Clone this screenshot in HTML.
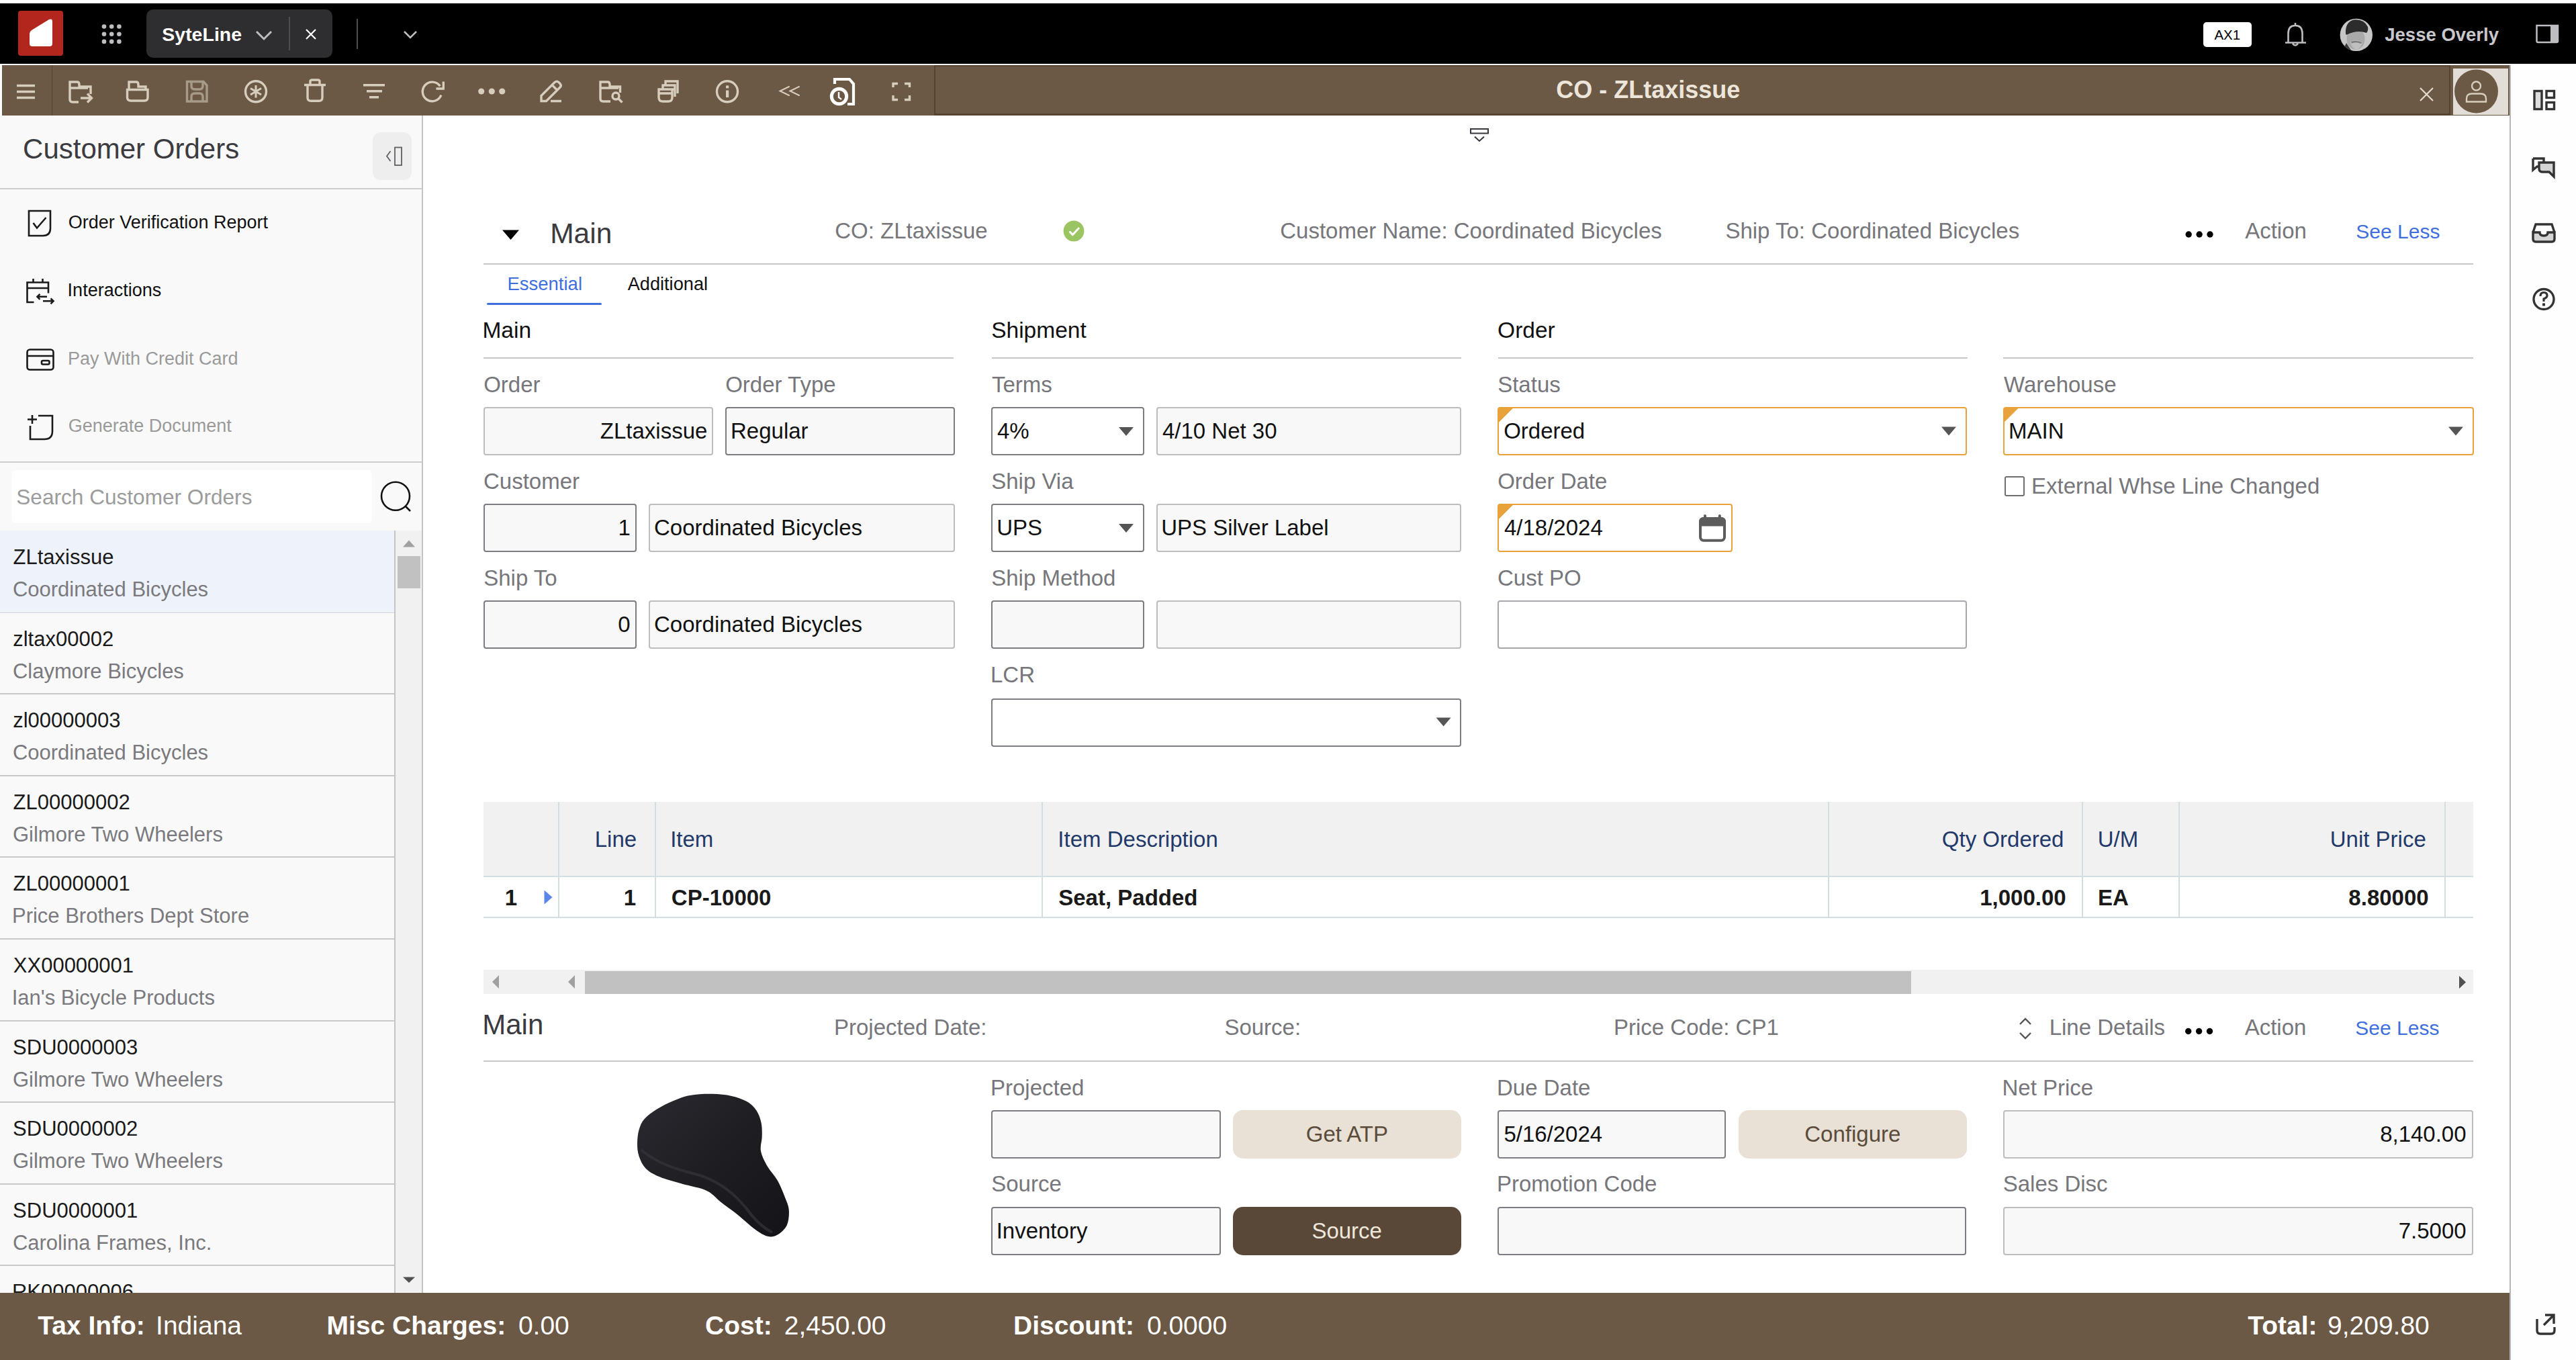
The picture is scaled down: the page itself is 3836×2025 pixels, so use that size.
<!DOCTYPE html>
<html><head><meta charset="utf-8"><title>CO - ZLtaxissue</title>
<style>
html,body{margin:0;padding:0;}
body{width:3836px;height:2025px;position:relative;overflow:hidden;background:#fff;font-family:"Liberation Sans",sans-serif;}
.t{position:absolute;white-space:nowrap;}
.b{position:absolute;box-sizing:border-box;}
svg.ov{position:absolute;left:0;top:0;}
</style></head><body>
<div class="b" style="left:0.00px;top:5.00px;width:3836.00px;height:90.00px;background:#000;"></div>
<div class="b" style="left:27.00px;top:16.00px;width:67.00px;height:67.00px;background:#b3261e;border-radius:4px;"></div>
<div class="b" style="left:218.00px;top:14.00px;width:277.00px;height:72.00px;background:#2e2e30;border-radius:10px;"></div>
<div class="t" style="left:241.28px;top:36.77px;font-size:28.5px;line-height:28.5px;color:#ffffff;font-weight:700;">SyteLine</div>
<div class="b" style="left:430.00px;top:25.00px;width:2.00px;height:50.00px;background:#4d4d52;"></div>
<div class="b" style="left:531.00px;top:28.00px;width:2.00px;height:45.00px;background:#4d4d52;"></div>
<div class="b" style="left:3281.00px;top:33.00px;width:72.00px;height:37.00px;background:#fff;border-radius:5px;"></div>
<div class="t" style="left:3297.43px;top:41.65px;font-size:20.5px;line-height:20.5px;color:#000;font-weight:400;">AX1</div>
<div class="t" style="left:3551.28px;top:37.72px;font-size:27.5px;line-height:27.5px;color:#c8c8cc;font-weight:700;">Jesse Overly</div>
<div class="b" style="left:3.00px;top:97.00px;width:3734.00px;height:75.00px;background:#6b5845;"></div>
<div class="b" style="left:76.50px;top:97.00px;width:1.50px;height:75.00px;background:#564330;"></div>
<div class="b" style="left:1391.00px;top:97.00px;width:2258.00px;height:75.00px;background:#6b5845;box-shadow:inset 0 0 0 2px #564330;"></div>
<div class="b" style="left:1391.00px;top:169.00px;width:2258.00px;height:3.00px;background:#564330;"></div>
<div class="t" style="left:2317.22px;top:116.33px;font-size:36px;line-height:36px;color:#ede5da;font-weight:700;">CO - ZLtaxissue</div>
<div class="b" style="left:3653.00px;top:102.00px;width:82.00px;height:69.00px;background:#e2ddd6;"></div>
<div class="b" style="left:3737.00px;top:97.00px;width:2.00px;height:1928.00px;background:#b6b6ba;"></div>
<div class="b" style="left:3739.00px;top:97.00px;width:97.00px;height:1928.00px;background:#fefefe;"></div>
<div class="b" style="left:0.00px;top:172.00px;width:628.00px;height:1753.00px;background:#f9f9f9;"></div>
<div class="b" style="left:628.00px;top:172.00px;width:2.00px;height:1753.00px;background:#c4c4c4;"></div>
<div class="t" style="left:34.07px;top:201.05px;font-size:42px;line-height:42px;color:#3b3b40;font-weight:400;">Customer Orders</div>
<div class="b" style="left:554.60px;top:196.60px;width:58.90px;height:71.80px;background:#eeeeee;border-radius:12px;"></div>
<div class="b" style="left:0.00px;top:280.00px;width:628.00px;height:2.00px;background:#cdcdcd;"></div>
<div class="t" style="left:101.82px;top:318.14px;font-size:27px;line-height:27px;color:#111;font-weight:400;">Order Verification Report</div>
<div class="t" style="left:100.61px;top:418.54px;font-size:27px;line-height:27px;color:#111;font-weight:400;">Interactions</div>
<div class="t" style="left:100.89px;top:520.94px;font-size:27px;line-height:27px;color:#9a9a9a;font-weight:400;">Pay With Credit Card</div>
<div class="t" style="left:101.74px;top:621.44px;font-size:27px;line-height:27px;color:#9a9a9a;font-weight:400;">Generate Document</div>
<div class="b" style="left:0.00px;top:687.00px;width:628.00px;height:2.00px;background:#cdcdcd;"></div>
<div class="b" style="left:18.00px;top:700.00px;width:535.50px;height:79.00px;background:#fff;border-radius:6px;"></div>
<div class="t" style="left:24.27px;top:724.85px;font-size:31.6px;line-height:31.6px;color:#9b9b9b;font-weight:400;">Search Customer Orders</div>
<div class="b" style="left:0.00px;top:790.00px;width:588.00px;height:120.10px;background:#eef2fa;"></div>
<div class="t" style="left:19.52px;top:814.06px;font-size:31px;line-height:31px;color:#1a1a1a;font-weight:400;">ZLtaxissue</div>
<div class="t" style="left:18.93px;top:862.06px;font-size:31px;line-height:31px;color:#7a7a7e;font-weight:400;">Coordinated Bicycles</div>
<div class="b" style="left:0.00px;top:910.60px;width:588.00px;height:2.00px;background:#dde2ea;"></div>
<div class="t" style="left:19.24px;top:935.66px;font-size:31px;line-height:31px;color:#1a1a1a;font-weight:400;">zltax00002</div>
<div class="t" style="left:18.93px;top:983.66px;font-size:31px;line-height:31px;color:#7a7a7e;font-weight:400;">Claymore Bicycles</div>
<div class="b" style="left:0.00px;top:1032.20px;width:588.00px;height:2.00px;background:#c9c9cc;"></div>
<div class="t" style="left:19.24px;top:1057.26px;font-size:31px;line-height:31px;color:#1a1a1a;font-weight:400;">zl00000003</div>
<div class="t" style="left:18.93px;top:1105.26px;font-size:31px;line-height:31px;color:#7a7a7e;font-weight:400;">Coordinated Bicycles</div>
<div class="b" style="left:0.00px;top:1153.80px;width:588.00px;height:2.00px;background:#c9c9cc;"></div>
<div class="t" style="left:19.52px;top:1178.86px;font-size:31px;line-height:31px;color:#1a1a1a;font-weight:400;">ZL00000002</div>
<div class="t" style="left:18.94px;top:1226.86px;font-size:31px;line-height:31px;color:#7a7a7e;font-weight:400;">Gilmore Two Wheelers</div>
<div class="b" style="left:0.00px;top:1275.40px;width:588.00px;height:2.00px;background:#c9c9cc;"></div>
<div class="t" style="left:19.52px;top:1300.46px;font-size:31px;line-height:31px;color:#1a1a1a;font-weight:400;">ZL00000001</div>
<div class="t" style="left:17.96px;top:1348.46px;font-size:31px;line-height:31px;color:#7a7a7e;font-weight:400;">Price Brothers Dept Store</div>
<div class="b" style="left:0.00px;top:1397.00px;width:588.00px;height:2.00px;background:#c9c9cc;"></div>
<div class="t" style="left:19.80px;top:1422.06px;font-size:31px;line-height:31px;color:#1a1a1a;font-weight:400;">XX00000001</div>
<div class="t" style="left:17.64px;top:1470.06px;font-size:31px;line-height:31px;color:#7a7a7e;font-weight:400;">Ian's Bicycle Products</div>
<div class="b" style="left:0.00px;top:1518.60px;width:588.00px;height:2.00px;background:#c9c9cc;"></div>
<div class="t" style="left:19.09px;top:1543.66px;font-size:31px;line-height:31px;color:#1a1a1a;font-weight:400;">SDU0000003</div>
<div class="t" style="left:18.94px;top:1591.66px;font-size:31px;line-height:31px;color:#7a7a7e;font-weight:400;">Gilmore Two Wheelers</div>
<div class="b" style="left:0.00px;top:1640.20px;width:588.00px;height:2.00px;background:#c9c9cc;"></div>
<div class="t" style="left:19.09px;top:1665.26px;font-size:31px;line-height:31px;color:#1a1a1a;font-weight:400;">SDU0000002</div>
<div class="t" style="left:18.94px;top:1713.26px;font-size:31px;line-height:31px;color:#7a7a7e;font-weight:400;">Gilmore Two Wheelers</div>
<div class="b" style="left:0.00px;top:1761.80px;width:588.00px;height:2.00px;background:#c9c9cc;"></div>
<div class="t" style="left:19.09px;top:1786.86px;font-size:31px;line-height:31px;color:#1a1a1a;font-weight:400;">SDU0000001</div>
<div class="t" style="left:18.93px;top:1834.86px;font-size:31px;line-height:31px;color:#7a7a7e;font-weight:400;">Carolina Frames, Inc.</div>
<div class="b" style="left:0.00px;top:1883.40px;width:588.00px;height:2.00px;background:#c9c9cc;"></div>
<div class="t" style="left:17.96px;top:1908.46px;font-size:31px;line-height:31px;color:#1a1a1a;font-weight:400;">RK00000006</div>
<div class="b" style="left:0.00px;top:2005.00px;width:588.00px;height:2.00px;background:#c9c9cc;"></div>
<div class="b" style="left:588.00px;top:790.00px;width:40.00px;height:1135.00px;background:#f1f1f1;"></div>
<div class="b" style="left:587.00px;top:790.00px;width:2.00px;height:1135.00px;background:#c4c4c4;"></div>
<div class="b" style="left:592.00px;top:828.00px;width:34.00px;height:48.00px;background:#c1c1c1;"></div>
<div class="b" style="left:0.00px;top:1925.00px;width:3737.00px;height:100.00px;background:#6b5845;"></div>
<div class="t" style="left:56.26px;top:1954.19px;font-size:39px;line-height:39px;color:#ffffff;font-weight:700;">Tax Info:</div>
<div class="t" style="left:232.10px;top:1954.19px;font-size:39px;line-height:39px;color:#ffffff;font-weight:400;">Indiana</div>
<div class="t" style="left:486.59px;top:1954.19px;font-size:39px;line-height:39px;color:#ffffff;font-weight:700;">Misc Charges:</div>
<div class="t" style="left:771.88px;top:1954.19px;font-size:39px;line-height:39px;color:#ffffff;font-weight:400;">0.00</div>
<div class="t" style="left:1050.10px;top:1954.19px;font-size:39px;line-height:39px;color:#ffffff;font-weight:700;">Cost:</div>
<div class="t" style="left:1167.74px;top:1954.19px;font-size:39px;line-height:39px;color:#ffffff;font-weight:400;">2,450.00</div>
<div class="t" style="left:1509.09px;top:1954.19px;font-size:39px;line-height:39px;color:#ffffff;font-weight:700;">Discount:</div>
<div class="t" style="left:1707.88px;top:1954.19px;font-size:39px;line-height:39px;color:#ffffff;font-weight:400;">0.0000</div>
<div class="t" style="left:3347.26px;top:1954.19px;font-size:39px;line-height:39px;color:#ffffff;font-weight:700;">Total:</div>
<div class="t" style="left:3466.01px;top:1954.19px;font-size:39px;line-height:39px;color:#ffffff;font-weight:400;">9,209.80</div>
<div class="b" style="left:630.00px;top:172.00px;width:3107.00px;height:1753.00px;background:#ffffff;"></div>
<div class="t" style="left:819.21px;top:326.72px;font-size:42.5px;line-height:42.5px;color:#3a3a3f;font-weight:400;">Main</div>
<div class="t" style="left:1243.22px;top:327.07px;font-size:33px;line-height:33px;color:#76767b;font-weight:400;">CO: ZLtaxissue</div>
<div class="t" style="left:1906.22px;top:327.07px;font-size:33px;line-height:33px;color:#76767b;font-weight:400;">Customer Name: Coordinated Bicycles</div>
<div class="t" style="left:2569.40px;top:327.07px;font-size:33px;line-height:33px;color:#76767b;font-weight:400;">Ship To: Coordinated Bicycles</div>
<div class="t" style="left:3343.14px;top:327.07px;font-size:33px;line-height:33px;color:#76767b;font-weight:400;">Action</div>
<div class="t" style="left:3508.34px;top:329.61px;font-size:30px;line-height:30px;color:#3f6fdc;font-weight:400;">See Less</div>
<div class="b" style="left:720.00px;top:391.50px;width:2963.00px;height:2.00px;background:#c8c8c8;"></div>
<div class="t" style="left:755.44px;top:408.72px;font-size:27.5px;line-height:27.5px;color:#3f6fdc;font-weight:400;">Essential</div>
<div class="t" style="left:934.65px;top:408.98px;font-size:27.2px;line-height:27.2px;color:#111;font-weight:400;">Additional</div>
<div class="b" style="left:725.00px;top:450.50px;width:171.00px;height:3.00px;background:#3f6fdc;border-radius:1.5px;"></div>
<div class="t" style="left:718.45px;top:474.64px;font-size:33.5px;line-height:33.5px;color:#111;font-weight:400;">Main</div>
<div class="t" style="left:1476.18px;top:474.64px;font-size:33.5px;line-height:33.5px;color:#111;font-weight:400;">Shipment</div>
<div class="t" style="left:2230.11px;top:474.64px;font-size:33.5px;line-height:33.5px;color:#111;font-weight:400;">Order</div>
<div class="b" style="left:720.00px;top:531.70px;width:699.50px;height:2.00px;background:#c8c8c8;"></div>
<div class="b" style="left:1476.50px;top:531.70px;width:699.50px;height:2.00px;background:#c8c8c8;"></div>
<div class="b" style="left:2230.50px;top:531.70px;width:699.50px;height:2.00px;background:#c8c8c8;"></div>
<div class="b" style="left:2983.00px;top:531.70px;width:699.50px;height:2.00px;background:#c8c8c8;"></div>
<div class="t" style="left:720.14px;top:555.77px;font-size:33px;line-height:33px;color:#76767b;font-weight:400;">Order</div>
<div class="t" style="left:1080.14px;top:555.77px;font-size:33px;line-height:33px;color:#76767b;font-weight:400;">Order Type</div>
<div class="b" style="left:719.90px;top:606.30px;width:342.00px;height:72.00px;background:#f8f8f8;box-shadow:inset 0 0 0 2px #bdbdc0;border-radius:4px;"></div>
<div class="t" style="left:893.80px;top:625.07px;font-size:33px;line-height:33px;color:#111;font-weight:400;">ZLtaxissue</div>
<div class="b" style="left:1080.30px;top:606.30px;width:341.60px;height:72.00px;background:#f8f8f8;box-shadow:inset 0 0 0 2px #7c7c82;border-radius:4px;"></div>
<div class="t" style="left:1087.99px;top:625.07px;font-size:33px;line-height:33px;color:#111;font-weight:400;">Regular</div>
<div class="t" style="left:720.02px;top:699.67px;font-size:33px;line-height:33px;color:#76767b;font-weight:400;">Customer</div>
<div class="b" style="left:719.90px;top:750.30px;width:228.10px;height:72.00px;background:#f8f8f8;box-shadow:inset 0 0 0 2px #7c7c82;border-radius:4px;"></div>
<div class="t" style="left:920.56px;top:769.07px;font-size:33px;line-height:33px;color:#111;font-weight:400;">1</div>
<div class="b" style="left:965.50px;top:750.30px;width:456.40px;height:72.00px;background:#f8f8f8;box-shadow:inset 0 0 0 2px #bdbdc0;border-radius:4px;"></div>
<div class="t" style="left:974.02px;top:769.07px;font-size:33px;line-height:33px;color:#111;font-weight:400;">Coordinated Bicycles</div>
<div class="t" style="left:720.20px;top:843.67px;font-size:33px;line-height:33px;color:#76767b;font-weight:400;">Ship To</div>
<div class="b" style="left:719.90px;top:894.30px;width:228.10px;height:72.00px;background:#f8f8f8;box-shadow:inset 0 0 0 2px #7c7c82;border-radius:4px;"></div>
<div class="t" style="left:920.24px;top:913.07px;font-size:33px;line-height:33px;color:#111;font-weight:400;">0</div>
<div class="b" style="left:965.50px;top:894.30px;width:456.40px;height:72.00px;background:#f8f8f8;box-shadow:inset 0 0 0 2px #bdbdc0;border-radius:4px;"></div>
<div class="t" style="left:974.02px;top:913.07px;font-size:33px;line-height:33px;color:#111;font-weight:400;">Coordinated Bicycles</div>
<div class="t" style="left:1476.96px;top:555.77px;font-size:33px;line-height:33px;color:#76767b;font-weight:400;">Terms</div>
<div class="b" style="left:1476.00px;top:606.30px;width:227.90px;height:72.00px;background:#fff;box-shadow:inset 0 0 0 2px #7c7c82;border-radius:4px;"></div>
<div class="t" style="left:1484.94px;top:625.07px;font-size:33px;line-height:33px;color:#111;font-weight:400;">4%</div>
<div class="b" style="left:1722.00px;top:606.30px;width:453.90px;height:72.00px;background:#f8f8f8;box-shadow:inset 0 0 0 2px #bdbdc0;border-radius:4px;"></div>
<div class="t" style="left:1730.94px;top:625.07px;font-size:33px;line-height:33px;color:#111;font-weight:400;">4/10 Net 30</div>
<div class="t" style="left:1476.20px;top:699.67px;font-size:33px;line-height:33px;color:#76767b;font-weight:400;">Ship Via</div>
<div class="b" style="left:1476.00px;top:750.30px;width:227.90px;height:72.00px;background:#fff;box-shadow:inset 0 0 0 2px #7c7c82;border-radius:4px;"></div>
<div class="t" style="left:1484.15px;top:769.07px;font-size:33px;line-height:33px;color:#111;font-weight:400;">UPS</div>
<div class="b" style="left:1722.00px;top:750.30px;width:453.90px;height:72.00px;background:#f8f8f8;box-shadow:inset 0 0 0 2px #bdbdc0;border-radius:4px;"></div>
<div class="t" style="left:1729.15px;top:769.07px;font-size:33px;line-height:33px;color:#111;font-weight:400;">UPS Silver Label</div>
<div class="t" style="left:1476.20px;top:843.67px;font-size:33px;line-height:33px;color:#76767b;font-weight:400;">Ship Method</div>
<div class="b" style="left:1476.00px;top:894.30px;width:227.90px;height:72.00px;background:#f8f8f8;box-shadow:inset 0 0 0 2px #7c7c82;border-radius:4px;"></div>
<div class="b" style="left:1722.00px;top:894.30px;width:453.90px;height:72.00px;background:#f8f8f8;box-shadow:inset 0 0 0 2px #bdbdc0;border-radius:4px;"></div>
<div class="t" style="left:1474.99px;top:988.07px;font-size:33px;line-height:33px;color:#76767b;font-weight:400;">LCR</div>
<div class="b" style="left:1476.00px;top:1039.80px;width:699.90px;height:72.00px;background:#fff;box-shadow:inset 0 0 0 2px #7c7c82;border-radius:4px;"></div>
<div class="t" style="left:2230.20px;top:555.77px;font-size:33px;line-height:33px;color:#76767b;font-weight:400;">Status</div>
<div class="b" style="left:2230.00px;top:606.30px;width:699.10px;height:72.00px;background:#fff;box-shadow:inset 0 0 0 2px #e9a23b;border-radius:4px;"></div>
<div class="t" style="left:2239.14px;top:625.07px;font-size:33px;line-height:33px;color:#111;font-weight:400;">Ordered</div>
<div class="t" style="left:2230.14px;top:699.67px;font-size:33px;line-height:33px;color:#76767b;font-weight:400;">Order Date</div>
<div class="b" style="left:2230.00px;top:750.30px;width:350.00px;height:72.00px;background:#fff;box-shadow:inset 0 0 0 2px #e9a23b;border-radius:4px;"></div>
<div class="t" style="left:2239.94px;top:769.07px;font-size:33px;line-height:33px;color:#111;font-weight:400;">4/18/2024</div>
<div class="t" style="left:2230.02px;top:843.67px;font-size:33px;line-height:33px;color:#76767b;font-weight:400;">Cust PO</div>
<div class="b" style="left:2230.00px;top:894.30px;width:699.10px;height:72.00px;background:#fff;box-shadow:inset 0 0 0 2px #a8a8ac;border-radius:4px;"></div>
<div class="t" style="left:2984.05px;top:555.77px;font-size:33px;line-height:33px;color:#76767b;font-weight:400;">Warehouse</div>
<div class="b" style="left:2982.50px;top:606.30px;width:701.00px;height:72.00px;background:#fff;box-shadow:inset 0 0 0 2px #e9a23b;border-radius:4px;"></div>
<div class="t" style="left:2990.99px;top:625.07px;font-size:33px;line-height:33px;color:#111;font-weight:400;">MAIN</div>
<div class="b" style="left:2985.00px;top:709.00px;width:30.00px;height:30.00px;background:#fff;box-shadow:inset 0 0 0 2px #6e6e73;border-radius:3px;"></div>
<div class="t" style="left:3024.99px;top:706.77px;font-size:33px;line-height:33px;color:#76767b;font-weight:400;">External Whse Line Changed</div>
<div class="b" style="left:720.00px;top:1194.00px;width:2963.00px;height:111.00px;background:#f1f1f1;"></div>
<div class="b" style="left:720.00px;top:1304.00px;width:2963.00px;height:2.00px;background:#d3dee2;"></div>
<div class="b" style="left:720.00px;top:1365.00px;width:2963.00px;height:2.00px;background:#d3dee2;"></div>
<div class="b" style="left:830.70px;top:1194.00px;width:2.00px;height:172.00px;background:#d3dee2;"></div>
<div class="b" style="left:974.70px;top:1194.00px;width:2.00px;height:172.00px;background:#d3dee2;"></div>
<div class="b" style="left:1551.00px;top:1194.00px;width:2.00px;height:172.00px;background:#d3dee2;"></div>
<div class="b" style="left:2722.00px;top:1194.00px;width:2.00px;height:172.00px;background:#d3dee2;"></div>
<div class="b" style="left:3100.00px;top:1194.00px;width:2.00px;height:172.00px;background:#d3dee2;"></div>
<div class="b" style="left:3244.00px;top:1194.00px;width:2.00px;height:172.00px;background:#d3dee2;"></div>
<div class="b" style="left:3640.00px;top:1194.00px;width:2.00px;height:172.00px;background:#d3dee2;"></div>
<div class="t" style="left:885.78px;top:1233.27px;font-size:33px;line-height:33px;color:#22396a;font-weight:400;">Line</div>
<div class="t" style="left:998.15px;top:1233.27px;font-size:33px;line-height:33px;color:#22396a;font-weight:400;">Item</div>
<div class="t" style="left:1575.35px;top:1233.27px;font-size:33px;line-height:33px;color:#22396a;font-weight:400;">Item Description</div>
<div class="t" style="left:2891.86px;top:1233.27px;font-size:33px;line-height:33px;color:#22396a;font-weight:400;">Qty Ordered</div>
<div class="t" style="left:3123.65px;top:1233.27px;font-size:33px;line-height:33px;color:#22396a;font-weight:400;">U/M</div>
<div class="t" style="left:3469.73px;top:1233.27px;font-size:33px;line-height:33px;color:#22396a;font-weight:400;">Unit Price</div>
<div class="t" style="left:751.87px;top:1320.27px;font-size:33px;line-height:33px;color:#1a1a1a;font-weight:700;">1</div>
<div class="t" style="left:928.87px;top:1320.27px;font-size:33px;line-height:33px;color:#1a1a1a;font-weight:700;">1</div>
<div class="t" style="left:999.85px;top:1320.27px;font-size:33px;line-height:33px;color:#1a1a1a;font-weight:700;">CP-10000</div>
<div class="t" style="left:1576.25px;top:1320.27px;font-size:33px;line-height:33px;color:#1a1a1a;font-weight:700;">Seat, Padded</div>
<div class="t" style="left:2948.20px;top:1320.27px;font-size:33px;line-height:33px;color:#1a1a1a;font-weight:700;">1,000.00</div>
<div class="t" style="left:3123.99px;top:1320.27px;font-size:33px;line-height:33px;color:#1a1a1a;font-weight:700;">EA</div>
<div class="t" style="left:3497.37px;top:1320.27px;font-size:33px;line-height:33px;color:#1a1a1a;font-weight:700;">8.80000</div>
<div class="b" style="left:720.00px;top:1444.00px;width:2963.00px;height:36.00px;background:#f1f1f1;"></div>
<div class="b" style="left:871.00px;top:1446.00px;width:1974.60px;height:34.00px;background:#c1c1c1;"></div>
<div class="t" style="left:718.25px;top:1505.05px;font-size:42px;line-height:42px;color:#3a3a3f;font-weight:400;">Main</div>
<div class="t" style="left:1241.99px;top:1513.07px;font-size:33px;line-height:33px;color:#76767b;font-weight:400;">Projected Date:</div>
<div class="t" style="left:1823.40px;top:1513.07px;font-size:33px;line-height:33px;color:#76767b;font-weight:400;">Source:</div>
<div class="t" style="left:2402.99px;top:1513.07px;font-size:33px;line-height:33px;color:#76767b;font-weight:400;">Price Code: CP1</div>
<div class="t" style="left:3051.69px;top:1513.07px;font-size:33px;line-height:33px;color:#76767b;font-weight:400;">Line Details</div>
<div class="t" style="left:3342.64px;top:1513.07px;font-size:33px;line-height:33px;color:#76767b;font-weight:400;">Action</div>
<div class="t" style="left:3507.34px;top:1515.61px;font-size:30px;line-height:30px;color:#3f6fdc;font-weight:400;">See Less</div>
<div class="b" style="left:720.00px;top:1578.50px;width:2963.00px;height:2.00px;background:#c8c8c8;"></div>
<div class="t" style="left:1474.99px;top:1603.37px;font-size:33px;line-height:33px;color:#76767b;font-weight:400;">Projected</div>
<div class="b" style="left:1475.50px;top:1653.40px;width:342.60px;height:72.00px;background:#f8f8f8;box-shadow:inset 0 0 0 2px #7c7c82;border-radius:4px;"></div>
<div class="b" style="left:1836.00px;top:1653.40px;width:339.50px;height:72.00px;background:#e9e1d6;border-radius:15px;"></div>
<div class="t" style="left:1944.73px;top:1672.17px;font-size:33px;line-height:33px;color:#5b4b3b;font-weight:400;">Get ATP</div>
<div class="t" style="left:1476.20px;top:1746.47px;font-size:33px;line-height:33px;color:#76767b;font-weight:400;">Source</div>
<div class="b" style="left:1475.50px;top:1797.40px;width:342.60px;height:72.00px;background:#f8f8f8;box-shadow:inset 0 0 0 2px #7c7c82;border-radius:4px;"></div>
<div class="t" style="left:1483.65px;top:1816.17px;font-size:33px;line-height:33px;color:#111;font-weight:400;">Inventory</div>
<div class="b" style="left:1836.00px;top:1797.40px;width:339.50px;height:72.00px;background:#594838;border-radius:15px;"></div>
<div class="t" style="left:1953.42px;top:1816.17px;font-size:33px;line-height:33px;color:#efe7db;font-weight:400;">Source</div>
<div class="t" style="left:2228.99px;top:1603.37px;font-size:33px;line-height:33px;color:#76767b;font-weight:400;">Due Date</div>
<div class="b" style="left:2230.10px;top:1653.40px;width:340.40px;height:72.00px;background:#f8f8f8;box-shadow:inset 0 0 0 2px #7c7c82;border-radius:4px;"></div>
<div class="t" style="left:2239.38px;top:1672.17px;font-size:33px;line-height:33px;color:#111;font-weight:400;">5/16/2024</div>
<div class="b" style="left:2589.00px;top:1653.40px;width:339.70px;height:72.00px;background:#e9e1d6;border-radius:15px;"></div>
<div class="t" style="left:2687.26px;top:1672.17px;font-size:33px;line-height:33px;color:#5b4b3b;font-weight:400;">Configure</div>
<div class="t" style="left:2228.99px;top:1746.47px;font-size:33px;line-height:33px;color:#76767b;font-weight:400;">Promotion Code</div>
<div class="b" style="left:2230.10px;top:1797.40px;width:698.40px;height:72.00px;background:#f8f8f8;box-shadow:inset 0 0 0 2px #7c7c82;border-radius:4px;"></div>
<div class="t" style="left:2981.49px;top:1603.37px;font-size:33px;line-height:33px;color:#76767b;font-weight:400;">Net Price</div>
<div class="b" style="left:2982.90px;top:1653.40px;width:700.20px;height:72.00px;background:#f8f8f8;box-shadow:inset 0 0 0 2px #bdbdc0;border-radius:4px;"></div>
<div class="t" style="left:3544.13px;top:1672.17px;font-size:33px;line-height:33px;color:#111;font-weight:400;">8,140.00</div>
<div class="t" style="left:2982.70px;top:1746.47px;font-size:33px;line-height:33px;color:#76767b;font-weight:400;">Sales Disc</div>
<div class="b" style="left:2982.90px;top:1797.40px;width:700.20px;height:72.00px;background:#f8f8f8;box-shadow:inset 0 0 0 2px #bdbdc0;border-radius:4px;"></div>
<div class="t" style="left:3571.66px;top:1816.17px;font-size:33px;line-height:33px;color:#111;font-weight:400;">7.5000</div>
<svg class="ov" width="3836" height="2025" viewBox="0 0 3836 2025">
<path d="M44 50 Q44 47 47 45 L73 29 Q78 27 78 32 L78 65 Q78 69 74 69 L48 69 Q44 69 44 65 Z" fill="#fff"/>
<circle cx="155.0" cy="39.5" r="3.3" fill="#bdbdc2"/>
<circle cx="155.0" cy="50.7" r="3.3" fill="#bdbdc2"/>
<circle cx="155.0" cy="61.9" r="3.3" fill="#bdbdc2"/>
<circle cx="166.2" cy="39.5" r="3.3" fill="#bdbdc2"/>
<circle cx="166.2" cy="50.7" r="3.3" fill="#bdbdc2"/>
<circle cx="166.2" cy="61.9" r="3.3" fill="#bdbdc2"/>
<circle cx="177.4" cy="39.5" r="3.3" fill="#bdbdc2"/>
<circle cx="177.4" cy="50.7" r="3.3" fill="#bdbdc2"/>
<circle cx="177.4" cy="61.9" r="3.3" fill="#bdbdc2"/>
<path d="M382 47 L393 58 L404 47" stroke="#bdbdc2" stroke-width="3" fill="none"/>
<path d="M456 44 L470 58 M470 44 L456 58" stroke="#fff" stroke-width="2.2" fill="none"/>
<path d="M602 47 L611 56 L620 47" stroke="#bdbdc2" stroke-width="2.5" fill="none"/>
<path d="M3407.5 63 L3407.5 50 Q3407.5 38 3418 38 Q3428.5 38 3428.5 50 L3428.5 63 M3403 63.5 L3434 63.5 M3414 65 Q3418 70 3422 65 M3418 34 L3418 38" stroke="#bdbdc2" stroke-width="2.6" fill="none"/>
<defs><clipPath id="avc"><circle cx="3508.8" cy="51.9" r="24.2"/></clipPath></defs>
<g clip-path="url(#avc)"><rect x="3484" y="27" width="50" height="50" fill="#c6c6c6"/><ellipse cx="3508" cy="58" rx="13.5" ry="16" fill="#a9a9a9"/><path d="M3493 50 Q3492 33 3505 29.5 Q3520 28 3526 40 Q3527 46 3524 49 Q3510 44 3494 52 Z" fill="#2c2c2c"/><path d="M3500 62 Q3509 58 3518 63 Q3516 72 3509 74 Q3502 72 3500 62 Z" fill="#bfbfbf"/><path d="M3501 62 Q3509 59.5 3517 63 L3516 65 Q3509 62 3502 64.5 Z" fill="#7a7a7a"/><path d="M3486 80 L3494 64 Q3499 72 3505 80 Z" fill="#3a3a3a"/><path d="M3517 80 L3520 72 L3524 80 Z" fill="#3a3a3a"/></g>
<path d="M3777.5 38 L3809 38 L3809 61 Q3809 63 3807 63 L3779.5 63 Q3777.5 63 3777.5 61 Z" stroke="#bdbdc2" stroke-width="2.5" fill="none"/><rect x="3798" y="38" width="11" height="25" fill="#bdbdc2"/>
<path d="M3604 131 L3623 150 M3623 131 L3604 150" stroke="#e6dccd" stroke-width="2.2" fill="none"/>
<circle cx="3687.5" cy="136" r="32.5" fill="#6b5845"/>
<circle cx="3687.5" cy="128" r="6.5" stroke="#d7cdbd" stroke-width="2.4" fill="none"/><path d="M3673 151.5 L3673 147 Q3673 139.5 3681 139.5 L3694 139.5 Q3702 139.5 3702 147 L3702 151.5 Z" stroke="#d7cdbd" stroke-width="2.4" fill="none"/>
<path d="M25 127.5 H52 M25 136.5 H52 M25 145.5 H52" stroke="#d7cdbd" stroke-width="3.4" fill="none"/>
<path d="M117 152 L108 152 Q104 152 104 148 L104 122 L115 122 Q118 122 118 126 L118 129 L135 129 L135 140 M104 131 L131 131" stroke="#d7cdbd" stroke-width="3.4" fill="none"/><path d="M120 146 L136 146 M130 139.5 L136.5 146 L130 152.5" stroke="#d7cdbd" stroke-width="3.4" fill="none"/>
<path d="M192 133 L192 122 L203 122 Q206 122 206 126 L206 129 L217 129 L217 133 M189.5 133.5 L220 133.5 L220 145 Q220 150 215 150 L195 150 Q189.5 150 189.5 145 Z" stroke="#d7cdbd" stroke-width="3.4" fill="none"/>
<path d="M278.5 121.5 L303 121.5 L308 127 L308 151 L278.5 151 Z M285 121.5 L285 128 Q285 133 290 133 L297 133 Q302 133 302 128 L302 121.5 M285 151 L285 144 Q285 139 290 139 L297 139 Q302 139 302 144 L302 151" stroke="#a89a88" stroke-width="3.4" fill="none"/>
<circle cx="381" cy="136.3" r="15.5" stroke="#d7cdbd" stroke-width="3.4" fill="none"/><path d="M381 127 V145.5 M373 131.5 L389 141 M389 131.5 L373 141" stroke="#d7cdbd" stroke-width="3" fill="none"/>
<path d="M453 126.5 H485 M462 126 L462 121 Q462 119 465 119 L473 119 Q476 119 476 121 L476 126 M458 127 L458 145.5 Q458 150.3 463 150.3 L475 150.3 Q480 150.3 480 145.5 L480 127" stroke="#d7cdbd" stroke-width="3.4" fill="none"/>
<path d="M541 126.8 H573 M546 135.8 H569 M550 144.7 H564" stroke="#d7cdbd" stroke-width="3.4" fill="none"/>
<path d="M656.9 141.6 A14.3 14.3 0 1 1 655.3 128.2" stroke="#d7cdbd" stroke-width="3.4" fill="none"/><path d="M649.5 132 L660.3 132 L660.3 121.5" stroke="#d7cdbd" stroke-width="3.4" fill="none"/>
<circle cx="716.7" cy="136" r="4.6" fill="#d7cdbd"/>
<circle cx="732.3" cy="136" r="4.6" fill="#d7cdbd"/>
<circle cx="747.7" cy="136" r="4.6" fill="#d7cdbd"/>
<path d="M806 150.5 L806 142.5 L826 122.5 Q829 120 832 122.5 L834 124.5 Q836.5 127.5 834 130 L813.5 150.5 Z M822 126.5 L830.5 135 M820 150.5 L836 150.5" stroke="#d7cdbd" stroke-width="3.4" fill="none"/>
<path d="M909 151 L898 151 Q894 151 894 147 L894 122 L905 122 Q908 122 908 126 L908 129 L923.5 129 L923.5 138 M894 131 L921 131" stroke="#d7cdbd" stroke-width="3.4" fill="none"/><circle cx="917" cy="143" r="5" stroke="#d7cdbd" stroke-width="3.4" fill="none"/><path d="M921 147 L926.5 152.5" stroke="#d7cdbd" stroke-width="3.4" fill="none"/>
<path d="M981 133 L1001 133 L1001 145 Q1001 151 995 151 L987 151 Q981 151 981 145 Z M981 139 L1001 139 M987 132 L987 127 L1005 127 L1005 144 M991 126 L991 121 L1009 121 L1009 139 M993 133 L1005 133" stroke="#d7cdbd" stroke-width="3.4" fill="none"/>
<circle cx="1083" cy="136.3" r="15.5" stroke="#d7cdbd" stroke-width="3.4" fill="none"/><rect x="1081" y="127.4" width="4.2" height="4" fill="#d7cdbd"/><rect x="1081" y="134.5" width="4.2" height="10.5" fill="#d7cdbd"/>
<path d="M1175 129 L1161.5 135.5 L1175 142 M1190 129 L1176.5 135.5 L1190 142" stroke="#d7cdbd" stroke-width="2" stroke-linecap="round" fill="none"/>
<path d="M1243 125 L1243 118 L1265 118 L1271 125 L1271 155 L1262 155" stroke="#fff" stroke-width="4.2" fill="none"/><circle cx="1249.5" cy="143.5" r="11.2" stroke="#fff" stroke-width="5" fill="none"/><path d="M1249 137 L1249 145 L1253 148" stroke="#fff" stroke-width="2.4" fill="none"/>
<path d="M1330 130 L1330 124.5 L1337 124.5 M1347 124.5 L1354.5 124.5 L1354.5 130 M1354.5 142 L1354.5 148.5 L1347 148.5 M1337 148.5 L1330 148.5 L1330 142" stroke="#d7cdbd" stroke-width="3.4" fill="none"/>
<rect x="3774" y="135.5" width="11" height="27" fill="#ddd" stroke="#333" stroke-width="3.4" fill="none"/><rect x="3792" y="135.5" width="11.5" height="10" stroke="#333" stroke-width="3.4" fill="none"/><rect x="3792" y="152.5" width="11.5" height="10" stroke="#333" stroke-width="3.4" fill="none"/>
<path d="M3772 236 L3788 236 L3788 242 M3772 236 L3772 253 L3778 248 L3781 248" stroke="#333" stroke-width="3.4" fill="none"/><path d="M3781 242 L3803 242 L3803 263 L3796 256 L3786 256 Q3781 256 3781 251 Z" fill="#d4d4d4" stroke="#333" stroke-width="3.4" fill="none"/>
<path d="M3772 346 L3772 356 Q3772 360 3776 360 L3800 360 Q3804 360 3804 356 L3804 346 L3794 346 Q3794 351 3788 351 Q3782 351 3782 346 Z" fill="#d4d4d4" stroke="#333" stroke-width="3.4" fill="none"/><path d="M3772 346 L3776 334 L3800 334 L3804 346" stroke="#333" stroke-width="3.4" fill="none"/>
<circle cx="3788" cy="445.5" r="15" stroke="#333" stroke-width="3.4" fill="none"/><path d="M3783 441 Q3783 435.5 3788 435.5 Q3793 435.5 3793 440 Q3793 443 3788 445 L3788 449" stroke="#333" stroke-width="3.2" fill="none"/><rect x="3786" y="451.5" width="4" height="4" fill="#333"/>
<path d="M3778 1964 L3778 1981 Q3778 1986 3783 1986 L3799 1986 Q3804 1986 3804 1981 L3804 1976 M3790 1958 L3803 1958 L3803 1971 M3802 1959 L3788 1973" stroke="#333" stroke-width="3.4" fill="none"/>
<path d="M581.5 225 L576 232.5 L581.5 240" stroke="#5f5f64" stroke-width="1.8" fill="none"/><rect x="588" y="219.5" width="10" height="26.5" stroke="#5f5f64" stroke-width="1.8" fill="none"/>
<path d="M43 314 L75 314 L75 340 Q75 351 64 351 L43 351 Z M49.5 332 L55 339.5 L68.5 324" stroke="#1a1a1a" stroke-width="2.6" fill="none"/>
<path d="M40.5 436 L40.5 420.5 L72 420.5 L72 436.5 M40.5 429 L72 429 M49.5 415 L49.5 420.5 M63.5 415 L63.5 420.5 M40.5 432 L40.5 450 L50.5 450 M70 441.8 L55.5 441.8 M59.5 437.8 L55.5 441.8 L59.5 445.8 M64 448.3 L79.5 448.3 M75.5 444.3 L79.5 448.3 L75.5 452.3" stroke="#1a1a1a" stroke-width="2.6" fill="none"/>
<rect x="40.5" y="520.5" width="39" height="30" rx="4" stroke="#1a1a1a" stroke-width="2.6" fill="none"/><path d="M40.5 530 L79.5 530" stroke="#1a1a1a" stroke-width="2.6" fill="none"/><rect x="62" y="537" width="11.5" height="5.5" rx="2" stroke="#1a1a1a" stroke-width="2.6" fill="none"/>
<path d="M57 619 L78 619 L78 642 Q78 654 66 654 L45 654 L45 634 M41 624.5 L55 624.5 M48 618 L48 631" stroke="#1a1a1a" stroke-width="2.6" fill="none"/>
<circle cx="589" cy="738.7" r="21" stroke="#111" stroke-width="2.6" fill="none"/><path d="M603.5 753.5 L611 761" stroke="#111" stroke-width="2.6"/>
<path d="M600 814.4 L609 804.6 L618 814.4 Z" fill="#a0a0a0"/><path d="M600 1901.5 L618 1901.5 L609 1910 Z" fill="#505050"/>
<rect x="2190" y="192" width="26" height="6.5" stroke="#37373d" stroke-width="2" fill="none"/><path d="M2196 203.5 L2203 210 L2210 203.5" stroke="#37373d" stroke-width="2" fill="none"/>
<path d="M748 342.5 L773 342.5 L760.5 357 Z" fill="#000"/>
<circle cx="1599" cy="344" r="15.4" fill="#9bc462"/><path d="M1593.4 345.4 L1597.4 349.6 L1606.2 340" stroke="#fff" stroke-width="3" stroke-linecap="round" stroke-linejoin="round" fill="none"/>
<circle cx="3259.2" cy="349" r="4.7" fill="#000"/>
<circle cx="3275.1" cy="349" r="4.7" fill="#000"/>
<circle cx="3291" cy="349" r="4.7" fill="#000"/>
<path d="M1666 636.0 L1688 636.0 L1677 649.0 Z" fill="#555"/>
<path d="M1666 780.0 L1688 780.0 L1677 793.0 Z" fill="#555"/>
<path d="M2138.6 1068.5 L2160.6 1068.5 L2149.6 1081.5 Z" fill="#555"/>
<path d="M2231.5 607.3 L2253.5 607.3 L2231.5 629.3 Z" fill="#e9a23b"/>
<path d="M2891 635.5 L2913 635.5 L2902 648.5 Z" fill="#555"/>
<path d="M2231.5 751.3 L2253.5 751.3 L2231.5 773.3 Z" fill="#e9a23b"/>
<rect x="2532" y="772" width="36" height="32.8" rx="5" stroke="#5c5c5c" stroke-width="4" fill="none"/><path d="M2530 783.6 L2530 777 Q2530 770 2537 770 L2563 770 Q2570 770 2570 777 L2570 783.6 Z" fill="#5c5c5c"/><path d="M2539 768 L2539 772 M2560.8 768 L2560.8 772" stroke="#5c5c5c" stroke-width="4" stroke-linecap="round"/>
<path d="M2984 607.3 L3006 607.3 L2984 629.3 Z" fill="#e9a23b"/>
<path d="M3646 635.5 L3668 635.5 L3657 648.5 Z" fill="#555"/>
<path d="M810.5 1325.5 L822.5 1336 L810.5 1346.5 Z" fill="#5b86e6"/>
<path d="M743 1452 L733 1462 L743 1472 Z" fill="#a0a0a0"/><path d="M856 1452 L846 1462 L856 1472 Z" fill="#a0a0a0"/><path d="M3662 1453 L3672 1462.5 L3662 1472 Z" fill="#505050"/>
<path d="M3008 1525 L3016 1517 L3024 1525 M3008 1538 L3016 1546 L3024 1538" stroke="#555" stroke-width="2.4" fill="none"/>
<circle cx="3258.7" cy="1535.5" r="4.7" fill="#000"/>
<circle cx="3274.6" cy="1535.5" r="4.7" fill="#000"/>
<circle cx="3290.5" cy="1535.5" r="4.7" fill="#000"/>
<defs><linearGradient id="seat" x1="0" y1="0" x2="1" y2="1"><stop offset="0" stop-color="#2a2a30"/><stop offset="0.5" stop-color="#1d1d22"/><stop offset="1" stop-color="#141418"/></linearGradient></defs>
<path d="M949.0 1703.0 C949.0 1696.5 949.7 1688.5 951.5 1682.3 C953.3 1676.1 955.2 1671.0 959.7 1665.9 C964.2 1660.8 971.0 1656.0 978.2 1651.5 C985.4 1647.0 994.8 1642.4 1003.0 1639.0 C1011.2 1635.6 1018.0 1632.6 1027.6 1630.9 C1037.2 1629.2 1050.3 1628.6 1060.6 1628.8 C1070.9 1629.0 1080.8 1630.0 1089.4 1631.9 C1098.0 1633.8 1105.8 1636.5 1112.0 1640.1 C1118.2 1643.7 1122.8 1648.2 1126.4 1653.5 C1130.0 1658.8 1132.2 1665.5 1133.6 1672.0 C1135.0 1678.5 1134.8 1685.6 1134.7 1692.6 C1134.6 1699.6 1131.6 1706.6 1133.0 1714.0 C1134.4 1721.4 1138.8 1729.7 1143.0 1737.0 C1147.2 1744.3 1153.7 1750.3 1158.0 1758.0 C1162.3 1765.7 1166.2 1775.7 1169.0 1783.0 C1171.8 1790.3 1174.3 1794.8 1174.8 1801.7 C1175.2 1808.6 1174.6 1818.2 1171.7 1824.4 C1168.8 1830.6 1162.1 1836.1 1157.3 1838.8 C1152.5 1841.5 1148.4 1842.2 1142.9 1840.8 C1137.4 1839.4 1132.0 1836.0 1124.4 1830.5 C1116.9 1825.0 1106.2 1814.8 1097.6 1807.9 C1089.0 1801.1 1080.5 1795.2 1072.9 1789.4 C1065.4 1783.6 1061.9 1777.4 1052.3 1772.9 C1042.7 1768.4 1027.0 1766.0 1015.3 1762.6 C1003.6 1759.2 991.2 1756.1 982.3 1752.3 C973.4 1748.5 966.9 1745.2 961.8 1740.0 C956.7 1734.8 953.6 1727.6 951.5 1721.4 C949.4 1715.2 949.0 1709.5 949.0 1703.0 Z" fill="url(#seat)"/>
<path d="M955 1712 Q980 1735 1035 1748 Q1080 1760 1112 1800 Q1130 1825 1150 1835" stroke="#34343a" stroke-width="4" fill="none" opacity="0.7"/>
</svg>
</body></html>
